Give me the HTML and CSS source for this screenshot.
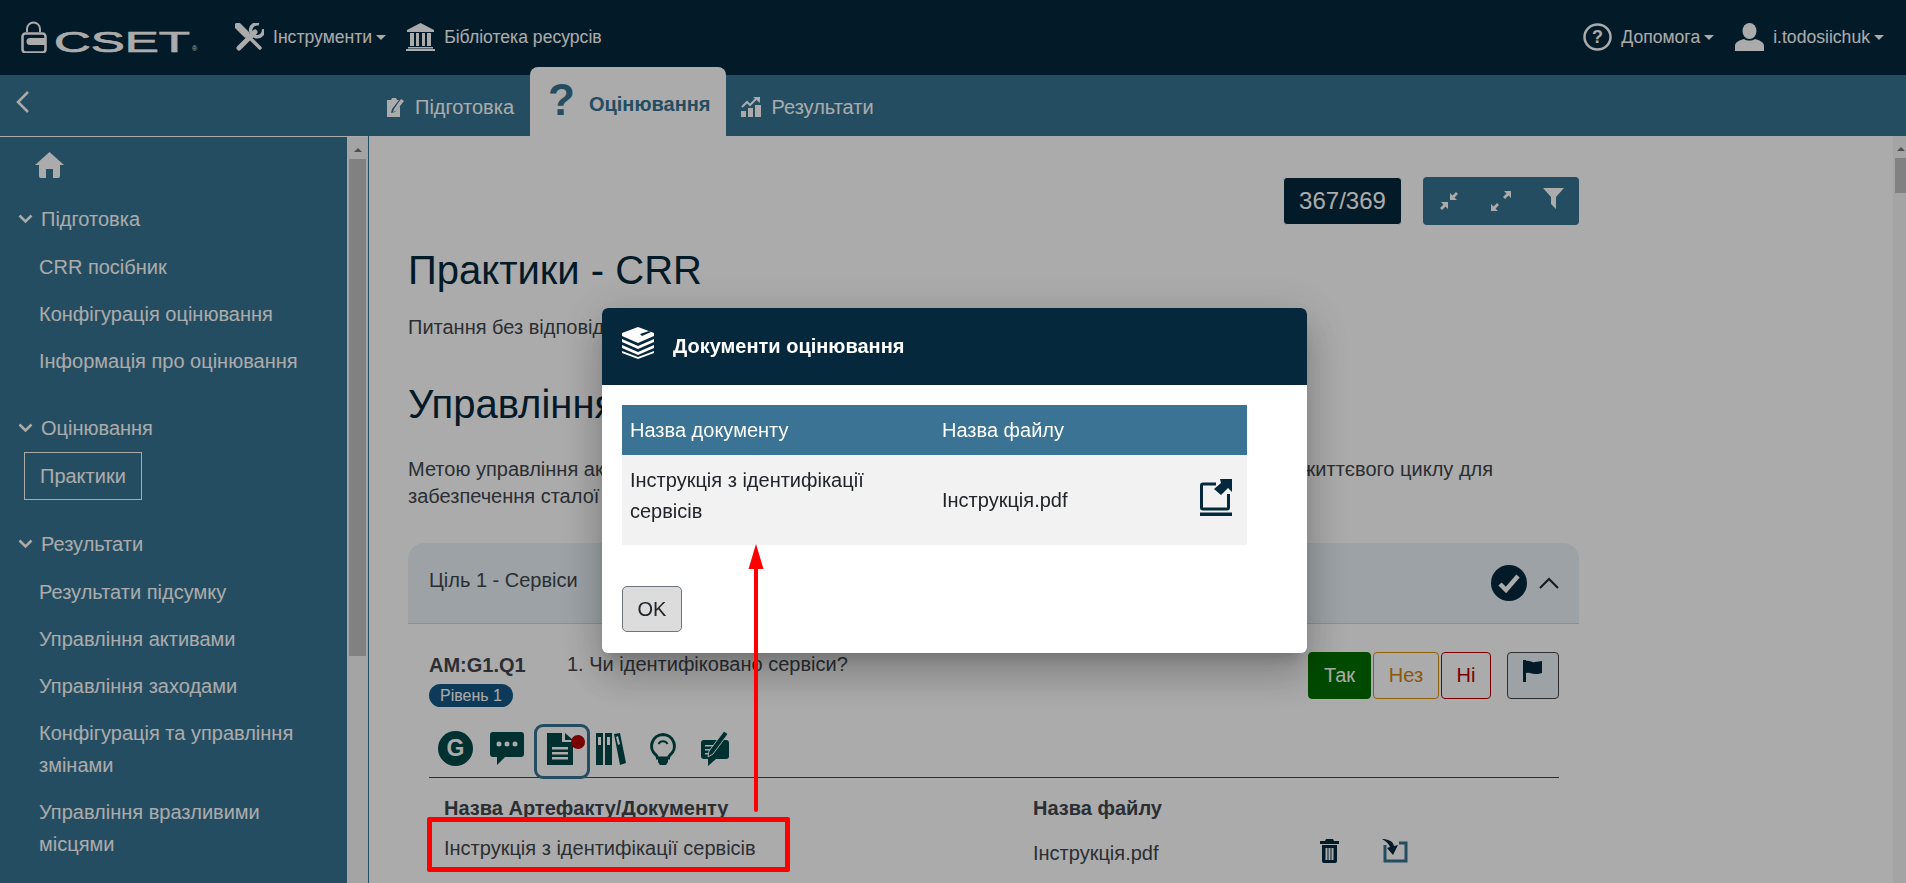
FILE: index.html
```html
<!DOCTYPE html>
<html lang="uk">
  <head>
    <meta charset="UTF-8" />
    <meta name="viewport" content="width=device-width, initial-scale=1.0" />
    <title>CSET</title>
    <link rel="stylesheet" href="styles.css">
  </head>
  <body>
    <header class="topbar">
      <svg class="logo" width="180" height="32" viewBox="0 0 180 32">
        <path d="M6 11V8a6.500 6.500 0 0 1 13 0v3" fill="none" stroke="#fff" stroke-width="2"/>
        <rect x="1.500" y="12.500" width="23" height="19" rx="3" fill="none" stroke="#fff" stroke-width="2.500"/>
        <path d="M9 17h15v7H9a3.500 3.500 0 0 1 0-7z" fill="#fff"/>
        <text x="33" y="31" class="logo-word" textLength="136" lengthAdjust="spacingAndGlyphs">CSET</text>
        <text x="171" y="30" class="logo-mark">®</text>
      </svg>
      <a class="nav-link tools-link">
        <svg width="29" height="28" viewBox="0 0 29 28">
          <path d="M3 3l22 22" stroke="#fff" stroke-width="3.500" stroke-linecap="round"/>
          <path d="M3 3l8 8" stroke="#fff" stroke-width="7" stroke-linecap="round"/>
          <path d="M20 9L4 25" stroke="#fff" stroke-width="5" stroke-linecap="round"/>
          <path d="M24 1a6.500 6.500 0 1 0 4.500 5" fill="none" stroke="#fff" stroke-width="3.500"/>
        </svg>
        <span>Інструменти</span><i class="caret"></i>
      </a>
      <a class="nav-link">
        <svg width="29" height="28" viewBox="0 0 29 28">
          <path d="M14.500 0L28 7v2H1V7z" fill="#fff"/>
          <path d="M4 10h4v13H4zM10 10h3v13h-3zM16 10h3v13h-3zM21 10h4v13h-4zM2 24h25v1.500H2zM0 26h29v2H0z" fill="#fff"/>
        </svg>
        <span>Бібліотека ресурсів</span>
      </a>
      <a class="nav-link push-right">
        <svg width="29" height="28" viewBox="0 0 29 28">
          <ellipse cx="14.500" cy="14" rx="13" ry="12.500" fill="none" stroke="#fff" stroke-width="2.500"/>
          <text x="14.500" y="20" class="help-mark">?</text>
        </svg>
        <span>Допомога</span><i class="caret"></i>
      </a>
      <a class="nav-link user-link">
        <svg width="29" height="28" viewBox="0 0 29 28">
          <ellipse cx="14.500" cy="8" rx="7" ry="8" fill="#fff"/>
          <path d="M0 28v-5c0-4 5-6 9-7 3 2 8 2 11 0 4 1 9 3 9 7v5z" fill="#fff"/>
        </svg>
        <span>i.todosiichuk</span><i class="caret"></i>
      </a>
    </header>

    <div class="subbar">
      <svg class="back" width="14" height="22" viewBox="0 0 14 22">
        <path d="M12 1L2 11l10 10" fill="none" stroke="#fff" stroke-width="2.500"/>
      </svg>
      <nav class="tabs">
        <a class="tab">
          <svg width="19" height="20" viewBox="0 0 19 20">
            <path d="M1 3h4l1-2h4l1 2h2l-7 9-1 4 4-1 5-6v11H1z" fill="#fff"/>
            <path d="M15 2l3 2-8 10-3 1 1-3z" fill="#fff"/>
          </svg>
          <span>Підготовка</span>
        </a>
        <a class="tab tab-active">
          <span class="tab-q">?</span>
          <span>Оцінювання</span>
        </a>
        <a class="tab">
          <svg width="20" height="20" viewBox="0 0 20 20">
            <path d="M0 14h5v6H0zM7 11h5v9H7zM14 8h6v12h-6z" fill="#fff"/>
            <path d="M1 10l5-5 3 3 6-6" fill="none" stroke="#fff" stroke-width="2"/>
            <path d="M12 0h7v6z" fill="#fff"/>
          </svg>
          <span>Результати</span>
        </a>
      </nav>
    </div>

    <div class="workspace">
      <aside class="sidebar">
        <svg class="home" width="29" height="26" viewBox="0 0 29 26">
          <path d="M14.500 0L29 13h-4v11a2 2 0 0 1-2 2h-5v-9h-7v9H6a2 2 0 0 1-2-2V13H0z" fill="#fff"/>
        </svg>
        <div class="side-group">
          <div class="side-head"><svg width="15" height="10" viewBox="0 0 15 10"><path d="M1.500 1.500l6 6 6-6" fill="none" stroke="#fff" stroke-width="2.500"/></svg>Підготовка</div>
          <a class="side-item">CRR посібник</a>
          <a class="side-item">Конфігурація оцінювання</a>
          <a class="side-item">Інформація про оцінювання</a>
        </div>
        <div class="side-group">
          <div class="side-head"><svg width="15" height="10" viewBox="0 0 15 10"><path d="M1.500 1.500l6 6 6-6" fill="none" stroke="#fff" stroke-width="2.500"/></svg>Оцінювання</div>
          <a class="side-current">Практики</a>
        </div>
        <div class="side-group">
          <div class="side-head"><svg width="15" height="10" viewBox="0 0 15 10"><path d="M1.500 1.500l6 6 6-6" fill="none" stroke="#fff" stroke-width="2.500"/></svg>Результати</div>
          <a class="side-item">Результати підсумку</a>
          <a class="side-item">Управління активами</a>
          <a class="side-item">Управління заходами</a>
          <a class="side-item">Конфігурація та управління змінами</a>
          <a class="side-item">Управління вразливими місцями</a>
        </div>
      </aside>
      <div class="scroll scroll-side"><i class="scroll-up"></i><div class="thumb thumb-side"></div></div>

      <main class="main">
        <div class="tools">
          <div class="counter">367/369</div>
          <div class="tool-group">
            <button class="tool">
              <svg width="20" height="20" viewBox="0 0 20 20"><path d="M11 9V2l2.500 2.500L17 1l2 2-3.500 3.500L18 9zM9 11H2l2.500 2.500L1 17l2 2 3.500-3.500L9 18z" fill="#fff"/></svg>
            </button>
            <button class="tool">
              <svg width="20" height="20" viewBox="0 0 20 20"><path d="M20 0v7l-2.500-2.500L14 8l-2-2 3.500-3.500L13 0zM0 20v-7l2.500 2.500L6 12l2 2-3.500 3.500L7 20z" fill="#fff"/></svg>
            </button>
            <button class="tool tool-filter">
              <svg width="21" height="21" viewBox="0 0 21 21"><path d="M0 0h21l-8 9v12l-5-5V9z" fill="#fff"/></svg>
            </button>
          </div>
        </div>

        <h2 class="page-title">Практики - CRR</h2>
        <p class="lead-line">Питання без відповіді приховано на цій сторінці</p>
        <h2 class="section-title">Управління активами</h2>
        <p class="intro">Метою управління активами, є ідентифікація, документація та управління активами протягом їх життєвого циклу для забезпечення сталої роботи критично важливих сервісів.</p>

        <section class="panel">
          <div class="panel-head">
            <span class="panel-name">Ціль 1 - Сервіси</span>
            <svg class="panel-check" width="36" height="36" viewBox="0 0 36 36">
              <circle cx="18" cy="18" r="18" fill="#05283c"/>
              <path d="M9 19l6 6 12-14" fill="none" stroke="#fff" stroke-width="4.500"/>
            </svg>
            <svg class="panel-toggle" width="20" height="12" viewBox="0 0 20 12"><path d="M1 11l9-9 9 9" fill="none" stroke="#212529" stroke-width="2"/></svg>
          </div>
          <div class="question">
            <div class="q-row">
              <div class="q-text">
                <div class="q-line"><b class="q-code">AM:G1.Q1</b><span>1. Чи ідентифіковано сервіси?</span></div>
                <span class="level">Рівень 1</span>
              </div>
              <div class="answers">
                <button class="ans ans-yes">Так</button>
                <button class="ans ans-na">Нез</button>
                <button class="ans ans-no">Ні</button>
                <button class="ans ans-flag">
                  <svg width="20" height="22" viewBox="0 0 20 22"><path d="M0 0h3v22H0z" fill="#05283c"/><path d="M3 1c4-1 6 2 9 1 3 0 5-1 7-1v12c-3 1-5 1-7 1-3 0-5-2-9-1z" fill="#05283c"/></svg>
                </button>
              </div>
            </div>
            <div class="q-icons">
              <span class="q-icon">
                <svg width="35" height="35" viewBox="0 0 35 35"><circle cx="17.500" cy="17.500" r="17.500" fill="#004848"/><text x="17.500" y="25" class="g-mark">G</text></svg>
              </span>
              <span class="q-icon">
                <svg width="34" height="33" viewBox="0 0 34 33"><path d="M3 0h28a3 3 0 0 1 3 3v19a3 3 0 0 1-3 3H15l-8 8v-8H3a3 3 0 0 1-3-3V3a3 3 0 0 1 3-3z" fill="#004848"/><circle cx="9" cy="12" r="2.500" fill="#fff"/><circle cx="17" cy="12" r="2.500" fill="#fff"/><circle cx="25" cy="12" r="2.500" fill="#fff"/></svg>
              </span>
              <span class="q-icon q-icon-on">
                <svg class="doc-icon" width="26" height="32" viewBox="0 0 26 32"><path d="M0 0h15v9h11v23H0z" fill="#004848"/><path d="M18 0l8 7h-8z" fill="#004848"/><path d="M5 14h16v2.500H5zM5 19h16v2.500H5zM5 24h16v2.500H5z" fill="#fff"/></svg>
                <i class="dot"></i>
              </span>
              <span class="q-icon">
                <svg width="30" height="32" viewBox="0 0 30 32"><path d="M0 0h7v32H0zM9 0h7v32H9zM18 1l6-1 6 30-6 2z" fill="#004848"/><path d="M2 4h3v8H2zM11 4h3v8h-3zM20 4l2-1 2 8-2 1z" fill="#fff"/></svg>
              </span>
              <span class="q-icon">
                <svg width="26" height="32" viewBox="0 0 26 32"><path d="M13 1.500a11.500 11.500 0 0 1 7 20.500c-1 1-1.500 2-1.500 3h-11c0-1-.5-2-1.500-3a11.500 11.500 0 0 1 7-20.500z" fill="none" stroke="#004848" stroke-width="3"/><path d="M8 26h10v3l-2 3h-6l-2-3z" fill="#004848"/><path d="M8.500 11a5 5 0 0 1 9 0" fill="none" stroke="#004848" stroke-width="2"/></svg>
              </span>
              <span class="q-icon">
                <svg width="28" height="35" viewBox="0 0 28 35"><path d="M3 9h22a3 3 0 0 1 3 3v13a3 3 0 0 1-3 3H15l-8 7v-7H3a3 3 0 0 1-3-3V12a3 3 0 0 1 3-3z" fill="#004848"/><path d="M4 14h12v1.500H4zM4 18h9v1.500H4zM4 22h7v1.500H4z" fill="#fff"/><path d="M23 0l4 3-15 20-5 3 1-6z" fill="#004848" stroke="#fff" stroke-width="1"/></svg>
              </span>
            </div>
            <div class="docs">
              <b>Назва Артефакту/Документу</b>
              <b>Назва файлу</b>
              <span></span>
              <span></span>
              <span class="doc-name">Інструкція з ідентифікації сервісів</span>
              <span class="doc-file">Інструкція.pdf</span>
              <svg class="doc-act" width="19" height="24" viewBox="0 0 19 24"><path d="M6 0h7l1 2h5v3H0V2h5zM2 6h15v16a2 2 0 0 1-2 2H4a2 2 0 0 1-2-2z" fill="#05283c"/><path d="M5.500 9h2v12h-2zM8.500 9h2v12h-2zM11.500 9h2v12h-2z" fill="#fff"/></svg>
              <svg class="doc-act" width="26" height="24" viewBox="0 0 26 24"><path d="M3 6v16h21V4h-7" fill="none" stroke="#377392" stroke-width="3"/><path d="M0 0c6 0 11 2 12 7l4-1-5 10-6-7 3-1C7 5 4 2 0 0z" fill="#05283c"/></svg>
            </div>
          </div>
        </section>
      </main>
      <div class="scroll scroll-main"><i class="scroll-up"></i><div class="thumb thumb-main"></div></div>
    </div>

    <div class="backdrop"></div>

    <div class="modal">
      <div class="modal-head">
        <svg class="modal-icon" width="32" height="32" viewBox="0 0 32 32">
          <path d="M16 0l16 6v3L16 16 0 9V6z" fill="#fff"/>
          <path d="M0 12l16 7 16-7v3L16 22 0 15zM0 18l16 7 16-7v3L16 28 0 21zM0 24l16 6 16-6v2L16 32 0 26z" fill="#fff"/>
          <path d="M18 7l9-3 2 1-9 4z" fill="#05283c"/>
        </svg>
        <h3>Документи оцінювання</h3>
      </div>
      <div class="modal-body">
        <table class="doc-table">
          <thead>
            <tr><th class="col-name">Назва документу</th><th class="col-file">Назва файлу</th><th></th></tr>
          </thead>
          <tbody>
            <tr>
              <td class="cell-name">Інструкція з ідентифікації сервісів</td>
              <td>Інструкція.pdf</td>
              <td class="cell-open">
                <svg width="32" height="37" viewBox="0 0 32 37">
                  <path d="M16 5H3a1.500 1.500 0 0 0-1.500 1.500v22A1.500 1.500 0 0 0 3 30h24a1.500 1.500 0 0 0 1.500-1.500V15" fill="none" stroke="#05283c" stroke-width="3"/>
                  <path d="M20 0h12v13l-4-4-7 7-7-6 7-6z" fill="#05283c"/>
                  <path d="M0 33.500h32V37H0z" fill="#05283c"/>
                </svg>
              </td>
            </tr>
          </tbody>
        </table>
        <button class="ok-btn">OK</button>
      </div>
    </div>

    <!-- червона позначка поверх скріншоту -->
    <div class="mark-box"></div>
    <svg class="mark-arrow" width="16" height="268" viewBox="0 0 16 268">
      <path d="M8 0l7.500 25h-5.500v241a2 2 0 0 1-4 0V25H.500z" fill="#f00"/>
    </svg>
  </body>
</html>
```

FILE: styles.css
```css
* {
  box-sizing: border-box;
}
html, body {
  height: 100%;
}
body {
  margin: 0;
  overflow: hidden;
  display: flex;
  flex-direction: column;
  background-color: #fff;
  color: #212529;
  font-family: "Liberation Sans", Arial, sans-serif;
  font-size: 20px;
}

/* top bar */
.topbar {
  height: 75px;
  flex: none;
  display: flex;
  align-items: center;
  padding: 0 22px 1px 21px;
  background-color: #05283c;
  color: #fff;
  font-size: 17.6px;
}
.logo {
  margin-right: 34px;
}
.logo-word {
  font-family: "Liberation Sans", sans-serif;
  font-size: 29px;
  fill: #fff;
  stroke: #fff;
  stroke-width: 0.7;
}
.logo-mark {
  font-size: 7px;
  fill: #fff;
}
.help-mark {
  font-size: 18px;
  font-weight: 700;
  fill: #fff;
  text-anchor: middle;
}
.nav-link {
  display: flex;
  align-items: center;
  gap: 9px;
}
.tools-link {
  margin-right: 20px;
}
.push-right {
  margin-left: auto;
}
.user-link {
  margin-left: 21px;
}
.caret {
  width: 0;
  height: 0;
  margin-left: -5px;
  border-top: 5px solid #fff;
  border-left: 5px solid transparent;
  border-right: 5px solid transparent;
}

/* second bar with tabs */
.subbar {
  height: 61px;
  flex: none;
  display: flex;
  align-items: flex-end;
  padding-left: 16px;
  background-color: #377392;
  color: #fff;
}
.back {
  align-self: center;
  margin-right: 356px;
  margin-bottom: 7px;
}
.tabs {
  display: flex;
  align-items: flex-end;
}
.tab {
  height: 61px;
  display: flex;
  align-items: center;
  gap: 10px;
  padding: 3px 16px 0 0;
}
.tab-active {
  height: 69px;
  gap: 14px;
  padding: 5px 16px 0 18px;
  margin-right: 15px;
  border-radius: 8px 8px 0 0;
  background-color: #fff;
  color: #377392;
  font-weight: 700;
}
.tab-q {
  font-size: 44px;
  line-height: 44px;
  margin-top: -9px;
}

/* layout under the bars */
.workspace {
  flex: 1;
  min-height: 0;
  display: flex;
}
.sidebar {
  width: 347px;
  flex: none;
  padding-top: 15px;
  border-top: 1px solid #fff;
  background-color: #377392;
  color: #fff;
  line-height: 32px;
  overflow: hidden;
}
.home {
  display: block;
  margin-left: 35px;
  margin-bottom: 17px;
}
.side-group {
  margin-bottom: 20px;
}
.side-head {
  height: 48px;
  display: flex;
  align-items: center;
  gap: 8px;
  padding-left: 18px;
}
.side-item {
  display: block;
  padding: 7.5px 30px 7.5px 39px;
}
.side-current {
  display: block;
  width: 118px;
  height: 48px;
  margin-left: 24px;
  padding: 7px 15px;
  border: 1px solid #fff;
}
.scroll {
  flex: none;
  background-color: #f5f5f5;
}
.scroll-side {
  width: 21px;
  padding: 11px 2px 0;
  border-top: 1px solid #fff;
}
.scroll-main {
  width: 13px;
  padding: 11px 0 0 2px;
}
.scroll-up {
  display: block;
  width: 0;
  height: 0;
  margin: 0 auto 7px;
  border-bottom: 4px solid #777;
  border-left: 4px solid transparent;
  border-right: 4px solid transparent;
}
.thumb {
  background-color: #c1c1c1;
}
.thumb-side {
  height: 497px;
}
.thumb-main {
  height: 35px;
}

/* main area */
.main {
  flex: 1;
  min-width: 0;
  padding: 41px 314px 0 39px;
  border-left: 1px solid #377392;
  color: #40464c;
  line-height: 27px;
  overflow: hidden;
}
.tools {
  display: flex;
  justify-content: flex-end;
  gap: 21px;
}
.counter {
  width: 119px;
  height: 48px;
  border: 1px solid #fff;
  border-radius: 4px;
  background-color: #05283c;
  color: #fff;
  font-size: 24px;
  line-height: 46px;
  text-align: center;
}
.tool-group {
  display: flex;
  border-radius: 4px;
  overflow: hidden;
}
.tool {
  width: 52px;
  height: 48px;
  padding: 0;
  border: 0;
  background-color: #377392;
  display: flex;
  align-items: center;
  justify-content: center;
}
.tool-filter {
  padding-bottom: 5px;
}
.page-title, .section-title {
  margin: 0;
  color: #05283c;
  font-size: 40px;
  font-weight: 400;
  line-height: 48px;
}
.page-title {
  margin-top: 21px;
}
.lead-line {
  margin: 20px 0 0;
}
.section-title {
  margin-top: 39px;
}
.intro {
  margin: 28px 0 33px;
}

/* goal panel */
.panel-head {
  height: 81px;
  display: flex;
  align-items: center;
  padding: 0 20px 0 21px;
  border-bottom: 1px solid #d5d5d5;
  border-radius: 16px 16px 0 0;
  background-color: #e9f2f7;
}
.panel-name {
  flex: 1;
  margin-top: -5px;
}
.panel-toggle {
  margin-left: 12px;
}
.question {
  padding: 28px 20px 0 21px;
}
.q-row {
  height: 72px;
  display: flex;
  justify-content: space-between;
}
.q-line {
  display: flex;
}
.q-line span {
  margin-top: -1px;
}
.q-code {
  width: 138px;
}
.level {
  display: inline-block;
  width: 84px;
  height: 23px;
  margin-top: 5px;
  border-radius: 12px;
  background-color: #145783;
  color: #fff;
  font-size: 16px;
  line-height: 23px;
  text-align: center;
}
.answers {
  display: flex;
  align-items: flex-start;
  gap: 2px;
}
.ans {
  height: 47px;
  padding: 0;
  border: 1px solid;
  border-radius: 4px;
  background: transparent;
  font-family: inherit;
  font-size: 20px;
}
.ans-yes {
  width: 63px;
  border-color: #006f00;
  background-color: #006f00;
  color: #fff;
}
.ans-na {
  width: 66px;
  border-color: #d98f10;
  color: #cc8412;
}
.ans-no {
  width: 50px;
  border-color: #b30000;
  color: #b30000;
}
.ans-flag {
  width: 52px;
  margin-left: 14px;
  padding-bottom: 4px;
  border-color: #444;
  background-color: #e9f2f7;
}
.q-icons {
  height: 54px;
  display: flex;
  border-bottom: 1px solid #0f5a6e;
}
.q-icon {
  position: relative;
  width: 52px;
  height: 49px;
  display: flex;
  align-items: center;
  justify-content: center;
}
.q-icon-on::before {
  content: "";
  position: absolute;
  left: 1px;
  top: 0;
  width: 50px;
  height: 49px;
  border: 3px solid #377392;
  border-radius: 9px;
}
.doc-icon {
  margin-left: 2px;
}
.dot {
  position: absolute;
  right: 0;
  top: 11px;
  width: 14px;
  height: 14px;
  border-radius: 50%;
  background-color: #b50000;
}
.g-mark {
  font-size: 23px;
  font-weight: 700;
  fill: #fff;
  text-anchor: middle;
}
.docs {
  display: grid;
  grid-template-columns: 589px 287px 62px 1fr;
  row-gap: 5px;
  align-items: center;
  padding: 15px 0 0 15px;
  line-height: 30px;
}
.doc-file {
  padding-top: 10px;
}
.doc-act {
  margin-top: 5px;
}

/* dialog */
.backdrop {
  position: fixed;
  inset: 0;
  background-color: rgba(0, 0, 0, 0.33);
}
.modal {
  position: fixed;
  left: 602px;
  top: 308px;
  width: 705px;
  border-radius: 6px;
  background-color: #fff;
  box-shadow: 0 11px 15px -7px rgba(0, 0, 0, 0.2), 0 24px 38px 3px rgba(0, 0, 0, 0.14), 0 9px 46px 8px rgba(0, 0, 0, 0.12);
}
.modal-head {
  height: 77px;
  display: flex;
  align-items: center;
  gap: 19px;
  padding-left: 20px;
  border-radius: 6px 6px 0 0;
  background-color: #05283c;
  color: #fff;
}
.modal-icon {
  margin-top: -8px;
}
.modal-head h3 {
  margin: 0;
  font-size: 20px;
}
.modal-body {
  padding: 20px 20px 21px;
}
.doc-table {
  width: 625px;
  border-collapse: collapse;
  table-layout: fixed;
  line-height: 31px;
}
.doc-table th {
  height: 50px;
  padding: 0 8px;
  background-color: #3a7393;
  color: #fff;
  font-weight: 400;
  text-align: left;
}
.col-name {
  width: 312px;
}
.col-file {
  width: 210px;
}
.doc-table td {
  height: 90px;
  padding: 0 8px;
  background-color: #f2f2f2;
}
.doc-table .cell-name {
  padding: 10px 8px 18px;
  vertical-align: top;
}
.cell-open svg {
  display: block;
  margin: -6px 0 0 48px;
}
.ok-btn {
  display: block;
  width: 60px;
  height: 46px;
  margin-top: 41px;
  padding: 0;
  border: 1px solid #6c757d;
  border-radius: 5px;
  background-color: #dcdcdc;
  color: #212529;
  font-family: inherit;
  font-size: 20px;
}

/* red annotation */
.mark-box {
  position: fixed;
  left: 427px;
  top: 817px;
  width: 363px;
  height: 55px;
  border: 5px solid #f00;
  border-radius: 2px;
}
.mark-arrow {
  position: fixed;
  left: 748px;
  top: 544px;
}
```
